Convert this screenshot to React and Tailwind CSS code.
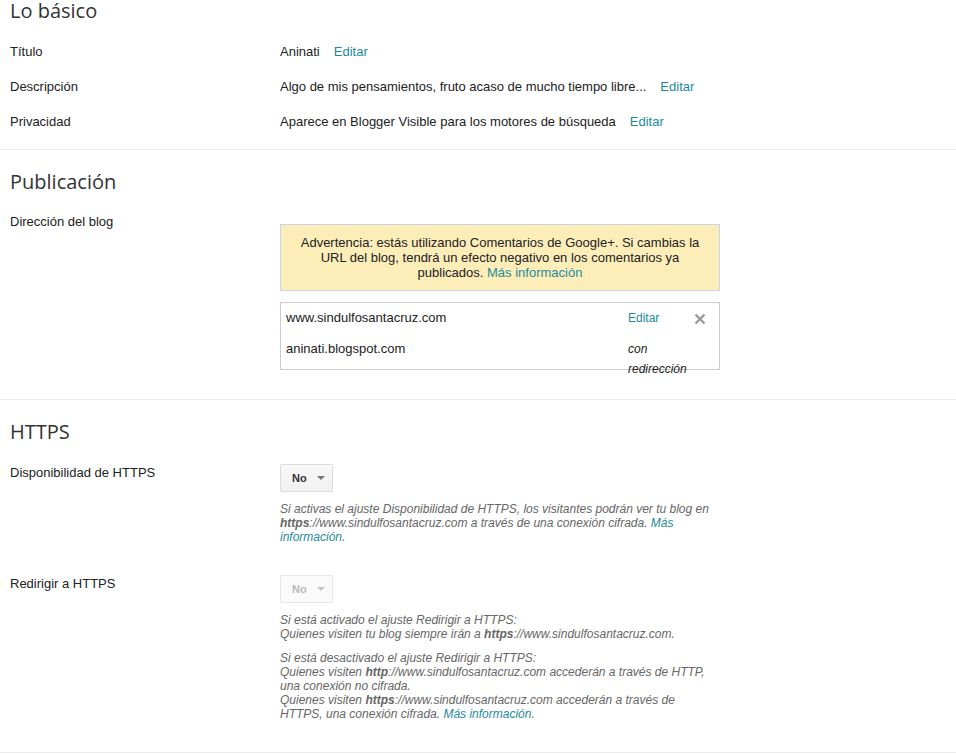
const LINK = "text-[#1d8a9c]";

function Heading({ children }) {
  return (
    <h2 className="text-[20px] leading-[20px] text-[#333] font-['Open_Sans',sans-serif] font-normal">
      {children}
    </h2>
  );
}

function Row({ label, children }) {
  return (
    <div className="flex h-[35px] items-center">
      <div className="w-[270px]">{label}</div>
      <div className="flex items-center">{children}</div>
    </div>
  );
}

function Select({ disabled }) {
  return (
    <div
      className={[
        "flex h-[28px] w-[53px] items-center rounded-[2px] border pl-[11px] text-[11px] font-bold",
        disabled
          ? "border-[#e8e8e8] bg-[#fafafa] text-[#b8b8b8]"
          : "border-[#dcdcdc] bg-gradient-to-b from-[#f8f8f8] to-[#f1f1f1] text-[#333]",
      ].join(" ")}
    >
      No
      <svg width="8" height="4" viewBox="0 0 8 4" className="ml-[10px]">
        <path d="M0 0h8L4 4z" fill={disabled ? "#c4c4c4" : "#777"} />
      </svg>
    </div>
  );
}

function Help({ children, className = "" }) {
  return (
    <p className={"w-[440px] text-[12px] leading-[14px] italic text-[#666] " + className}>{children}</p>
  );
}

export default function App() {
  return (
    <div className="min-h-[755px] bg-white font-['Liberation_Sans',Arial,sans-serif] text-[13px] text-[#222]">
      {/* Lo básico */}
      <section className="border-b border-[#ebebeb] pb-[10px] pl-[10px]">
        <div className="pt-[1px]">
          <Heading>Lo básico</Heading>
        </div>
        <div className="mt-[13px]">
          <Row label="Título">
            <span>Aninati</span>
            <a className={"ml-[14px] " + LINK}>Editar</a>
          </Row>
          <Row label="Descripción">
            <span>Algo de mis pensamientos, fruto acaso de mucho tiempo libre...</span>
            <a className={"ml-[14px] " + LINK}>Editar</a>
          </Row>
          <Row label="Privacidad">
            <span>Aparece en Blogger Visible para los motores de búsqueda</span>
            <a className={"ml-[14px] " + LINK}>Editar</a>
          </Row>
        </div>
      </section>

      {/* Publicación */}
      <section className="border-b border-[#ebebeb] pb-[29px] pl-[10px] pt-[22px]">
        <Heading>Publicación</Heading>
        <div className="mt-[22px] flex">
          <div className="w-[270px] leading-[16px]">Dirección del blog</div>
          <div className="mt-[10px] flex flex-col">
            <div className="w-[440px] border border-[#c9d2e8] bg-[#fdedb8] px-[12px] py-[10px] text-center leading-[15px]">
              Advertencia: estás utilizando Comentarios de Google+. Si cambias la URL del blog, tendrá un efecto negativo en los comentarios ya publicados.{" "}
              <a className={LINK}>Más información</a>
            </div>
            <div className="mt-[11px] w-[440px] border border-[#cccccc] pt-[5px]">
              <div className="flex h-[31px] items-start leading-[20px]">
                <div className="w-[347px] pl-[5px]">www.sindulfosantacruz.com</div>
                <a className={"w-[62px] text-[12px] " + LINK}>Editar</a>
                <svg width="12" height="12" viewBox="0 0 12 12" className="mt-[5px] ml-[4px]">
                  <path d="M1.5 1.5l9 9M10.5 1.5l-9 9" stroke="#9a9a9a" strokeWidth="2.4" />
                </svg>
              </div>
              <div className="flex h-[30px] items-start leading-[20px]">
                <div className="w-[347px] pl-[5px]">aninati.blogspot.com</div>
                <div className="w-[62px] text-[12px] italic">con redirección</div>
              </div>
            </div>
          </div>
        </div>
      </section>

      {/* HTTPS */}
      <section className="border-b border-[#ebebeb] pb-[31px] pl-[10px] pt-[22px]">
        <Heading>HTTPS</Heading>
        <div className="mt-[21px] flex">
          <div className="w-[270px] leading-[20px]">Disponibilidad de HTTPS</div>
          <div className="mt-[1px] flex flex-col">
            <Select />
            <Help className="mt-[10px]">
              Si activas el ajuste Disponibilidad de HTTPS, los visitantes podrán ver tu blog en{" "}
              <b className="font-bold">https</b>://www.sindulfosantacruz.com a través de una conexión cifrada.{" "}
              <a className={LINK}>Más información</a>.
            </Help>
          </div>
        </div>
        <div className="mt-[30px] flex">
          <div className="w-[270px] leading-[20px]">Redirigir a HTTPS</div>
          <div className="mt-[1px] flex flex-col">
            <Select disabled />
            <Help className="mt-[10px]">
              Si está activado el ajuste Redirigir a HTTPS:
              <br />
              Quienes visiten tu blog siempre irán a <b className="font-bold">https</b>://www.sindulfosantacruz.com.
            </Help>
            <Help className="mt-[10px]">
              Si está desactivado el ajuste Redirigir a HTTPS:
              <br />
              Quienes visiten <b className="font-bold">http</b>://www.sindulfosantacruz.com accederán a través de HTTP, una conexión no cifrada.
              <br />
              Quienes visiten <b className="font-bold">https</b>://www.sindulfosantacruz.com accederán a través de HTTPS, una conexión cifrada.{" "}
              <a className={LINK}>Más información</a>.
            </Help>
          </div>
        </div>
      </section>
    </div>
  );
}
